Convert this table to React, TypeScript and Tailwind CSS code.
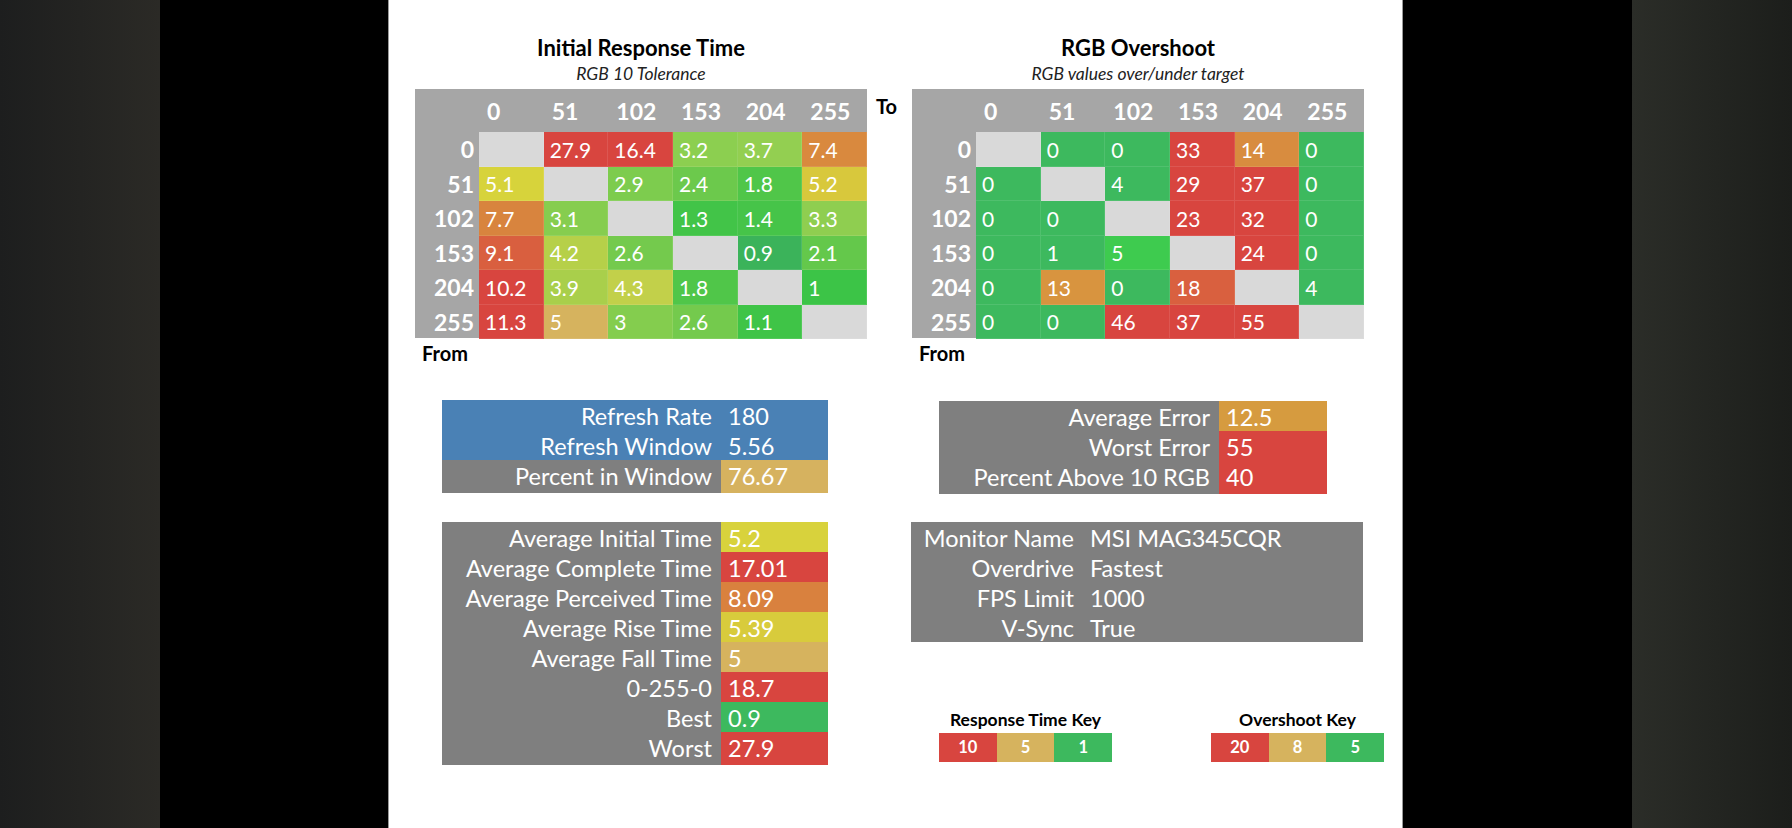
import React from 'react';

const E = 'bg-[#d9d9d9]';
const R = 'bg-[#d8453f]';
const G = 'bg-[#3db95e]';

type Cell = [string, string];

const heads = ['0', '51', '102', '153', '204', '255'];

const response: Cell[][] = [
  [['', E], ['27.9', R], ['16.4', R], ['3.2', 'bg-[#8ccf50]'], ['3.7', 'bg-[#93cf51]'], ['7.4', 'bg-[#d9893e]']],
  [['5.1', 'bg-[#d7d33b]'], ['', E], ['2.9', 'bg-[#7dcc4e]'], ['2.4', 'bg-[#6cc94c]'], ['1.8', 'bg-[#50c649]'], ['5.2', 'bg-[#d8c83c]']],
  [['7.7', 'bg-[#d8843e]'], ['3.1', 'bg-[#86cd4f]'], ['', E], ['1.3', 'bg-[#42c448]'], ['1.4', 'bg-[#46c449]'], ['3.3', 'bg-[#8fce50]']],
  [['9.1', 'bg-[#d95f3f]'], ['4.2', 'bg-[#b6d049]'], ['2.6', 'bg-[#74ca4d]'], ['', E], ['0.9', 'bg-[#3bb35a]'], ['2.1', 'bg-[#64c84b]']],
  [['10.2', R], ['3.9', 'bg-[#a9cf4b]'], ['4.3', 'bg-[#c2d04a]'], ['1.8', 'bg-[#50c649]'], ['', E], ['1', 'bg-[#3cc447]']],
  [['11.3', R], ['5', 'bg-[#d6b35e]'], ['3', 'bg-[#84cd4e]'], ['2.6', 'bg-[#74ca4d]'], ['1.1', 'bg-[#3fc447]'], ['', E]],
];

const overshoot: Cell[][] = [
  [['', E], ['0', G], ['0', G], ['33', R], ['14', 'bg-[#d88c3f]'], ['0', G]],
  [['0', G], ['', E], ['4', G], ['29', R], ['37', R], ['0', G]],
  [['0', G], ['0', G], ['', E], ['23', R], ['32', R], ['0', G]],
  [['0', G], ['1', G], ['5', 'bg-[#3ecb4f]'], ['', E], ['24', R], ['0', G]],
  [['0', G], ['13', 'bg-[#d8943f]'], ['0', G], ['18', 'bg-[#d9603f]'], ['', E], ['4', G]],
  [['0', G], ['0', G], ['46', R], ['37', R], ['55', R], ['', E]],
];

const refresh: { label: string; value: string; lab: string; val: string }[] = [
  { label: 'Refresh Rate', value: '180', lab: 'bg-[#4a81b5]', val: 'bg-[#4a81b5]' },
  { label: 'Refresh Window', value: '5.56', lab: 'bg-[#4a81b5]', val: 'bg-[#4a81b5]' },
  { label: 'Percent in Window', value: '76.67', lab: 'bg-[#7f7f7f]', val: 'bg-[#d6b25f]' },
];

const times: [string, string, string][] = [
  ['Average Initial Time', '5.2', 'bg-[#d8d23c]'],
  ['Average Complete Time', '17.01', R],
  ['Average Perceived Time', '8.09', 'bg-[#d9813e]'],
  ['Average Rise Time', '5.39', 'bg-[#d8cb3c]'],
  ['Average Fall Time', '5', 'bg-[#d6b35e]'],
  ['0-255-0', '18.7', R],
  ['Best', '0.9', G],
  ['Worst', '27.9', R],
];

const errors: [string, string, string][] = [
  ['Average Error', '12.5', 'bg-[#d69b3f]'],
  ['Worst Error', '55', R],
  ['Percent Above 10 RGB', '40', R],
];

const monitor: [string, string][] = [
  ['Monitor Name', 'MSI MAG345CQR'],
  ['Overdrive', 'Fastest'],
  ['FPS Limit', '1000'],
  ['V-Sync', 'True'],
];

function Heatmap({ title, subtitle, data }: { title: string; subtitle: string; data: Cell[][] }) {
  return (
    <div className="flex flex-col">
      <div className="w-[452px] mt-[34px] h-[28px] leading-[28px] text-center text-[22px] font-bold text-black">{title}</div>
      <div className="w-[452px] mt-[1px] h-[22px] leading-[22px] text-center text-[17.5px] italic text-[#222]">{subtitle}</div>
      <div className="flex mt-[4px]">
        <div className="grid grid-cols-[64px_repeat(6,1fr)] grid-rows-[43px_repeat(6,1fr)] w-[452px] h-[249px] bg-[#a6a6a6] text-white text-[21px]">
          <div />
          {heads.map((h) => (
            <div key={h} className="flex items-center pl-[8px] pt-[2px] font-bold text-[23px]">{h}</div>
          ))}
          {data.map((row, i) => (
            <React.Fragment key={i}>
              <div className="flex items-center justify-end pr-[5px] font-bold text-[23px]">{heads[i]}</div>
              {row.map(([v, c], j) => (
                <div key={j} className={`flex items-center pl-[6px] shadow-[inset_-1px_-1px_0_rgba(255,255,255,0.1)] ${c}`}>{v}</div>
              ))}
            </React.Fragment>
          ))}
        </div>
      </div>
      <div className="mt-[3px] pl-[7px] h-[24px] leading-[24px] text-[20px] font-bold text-black">From</div>
    </div>
  );
}

function Row({ label, value, lab, val, split }: { label: string; value: string; lab: string; val: string; split: string }) {
  return (
    <div className={`grid ${split} h-[30px] text-[23.5px] text-white leading-[33px]`}>
      <div className={`text-right pr-[9px] whitespace-nowrap ${lab}`}>{label}</div>
      <div className={`pl-[7px] ${val}`}>{value}</div>
    </div>
  );
}

function Key({ title, items }: { title: string; items: string[] }) {
  const cols = [R, 'bg-[#d6b35e]', G];
  return (
    <div className="flex flex-col w-[173px]">
      <div className="h-[22px] leading-[22px] text-center text-[17.5px] font-bold text-black whitespace-nowrap">{title}</div>
      <div className="mt-[2px] grid grid-cols-3 h-[29px]">
        {items.map((t, i) => (
          <div key={t} className={`flex items-center justify-center text-[16.5px] font-bold text-white ${cols[i]}`}>{t}</div>
        ))}
      </div>
    </div>
  );
}

export default function App() {
  return (
    <div className="flex w-[1792px] h-[828px] overflow-hidden bg-black font-['Lato','Open_Sans',sans-serif]">
      <div className="w-[160px] h-full bg-linear-to-r from-[#1d1e1e] to-[#2b2a26]" />
      <div className="w-[228px] h-full bg-black" />
      <div className="w-[1015px] h-full bg-white border-x border-[#9a9a9a] flex pl-[26px]">
        {/* left column */}
        <div className="w-[497px] flex flex-col">
          <div className="flex items-start">
            <Heatmap title="Initial Response Time" subtitle="RGB 10 Tolerance" data={response} />
            <div className="ml-[9px] mt-[94px] text-[20px] font-bold text-black leading-[24px]">To</div>
          </div>
          <div className="ml-[27px] mt-[35px] w-[386px] flex flex-col">
            {refresh.map((r) => (
              <Row key={r.label} {...r} split="grid-cols-[279px_1fr]" />
            ))}
          </div>
          <div className="ml-[27px] mt-[32px] w-[386px] flex flex-col">
            {times.map(([l, v, c]) => (
              <Row key={l} label={l} value={v} lab="bg-[#7f7f7f]" val={c} split="grid-cols-[279px_1fr]" />
            ))}
          </div>
        </div>
        {/* right column */}
        <div className="w-[480px] flex flex-col">
          <Heatmap title="RGB Overshoot" subtitle="RGB values over/under target" data={overshoot} />
          <div className="ml-[27px] mt-[36px] w-[388px] flex flex-col">
            {errors.map(([l, v, c]) => (
              <Row key={l} label={l} value={v} lab="bg-[#7f7f7f]" val={c} split="grid-cols-[280px_1fr]" />
            ))}
          </div>
          <div className="-ml-[1px] mt-[31px] w-[452px] bg-[#7f7f7f] flex flex-col">
            {monitor.map(([l, v]) => (
              <div key={l} className="grid grid-cols-[171px_1fr] h-[30px] leading-[33px] text-[23.5px] text-white">
                <div className="text-right pr-[8px] whitespace-nowrap">{l}</div>
                <div className="pl-[8px]">{v}</div>
              </div>
            ))}
          </div>
          <div className="mt-[67px] ml-[27px] flex gap-[99px]">
            <Key title="Response Time Key" items={['10', '5', '1']} />
            <Key title="Overshoot Key" items={['20', '8', '5']} />
          </div>
        </div>
      </div>
      <div className="w-[229px] h-full bg-black" />
      <div className="w-[160px] h-full bg-linear-to-r from-[#2b2d28] to-[#1c1e1b]" />
    </div>
  );
}
